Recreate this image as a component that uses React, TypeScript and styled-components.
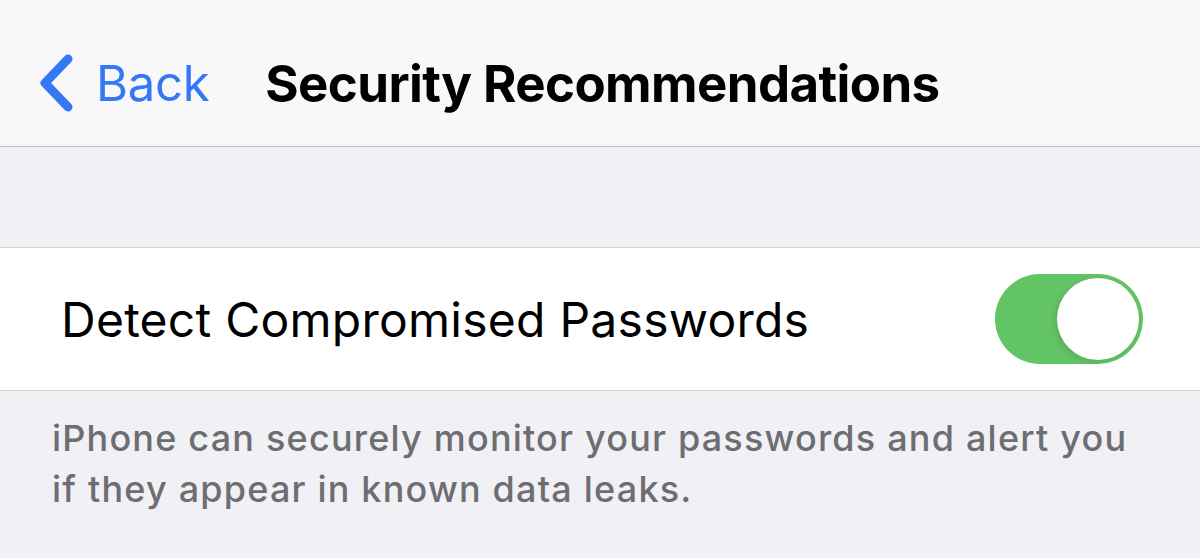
import React from "react";
import styled, { createGlobalStyle } from "styled-components";

const Global = createGlobalStyle`
  html, body { margin: 0; padding: 0; background: #f0f0f5; }
  body { font-family: Inter, "Noto Sans", sans-serif; -webkit-font-smoothing: antialiased; }
`;

const Page = styled.div`
  width: 1200px;
  height: 558px;
  overflow: hidden;
  background: #f0f0f5;
  display: flex;
  flex-direction: column;
`;

const NavBar = styled.header`
  height: 147px;
  box-sizing: border-box;
  background: #f8f8fa;
  border-bottom: 1.5px solid #bdbcc1;
  display: flex;
  align-items: center;
  padding: 20px 0 0 38px;
`;

const BackButton = styled.button`
  display: flex;
  align-items: center;
  gap: 22px;
  border: 0;
  background: none;
  padding: 0;
  color: #3478f6;
  font-family: inherit;
  font-size: 49px;
  font-weight: 400;
  letter-spacing: -0.3px;
`;

const Title = styled.h1`
  margin: 0 0 0 56px;
  font-size: 51px;
  font-weight: 700;
  color: #000;
  letter-spacing: -0.6px;
`;

const Spacer = styled.div`
  height: 101px;
  box-sizing: border-box;
  border-bottom: 1.5px solid #d3d2d7;
`;

const Row = styled.div`
  height: 143px;
  box-sizing: border-box;
  background: #ffffff;
  border-bottom: 1.5px solid #d3d2d7;
  display: flex;
  align-items: center;
  justify-content: space-between;
  padding: 0 57px 0 61px;
`;

const RowLabel = styled.span`
  font-size: 48px;
  font-weight: 400;
  color: #000;
  letter-spacing: 0.25px;
`;

const Toggle = styled.div<{ $on: boolean }>`
  width: 148px;
  height: 90px;
  border-radius: 45px;
  background: ${(p) => (p.$on ? "#63c466" : "#e9e9eb")};
  box-sizing: border-box;
  display: flex;
  justify-content: ${(p) => (p.$on ? "flex-end" : "flex-start")};
  align-items: center;
  padding: 4px;
`;

const Knob = styled.div`
  width: 82px;
  height: 82px;
  border-radius: 50%;
  background: #fff;
  box-shadow: -2px 2px 6px rgba(0, 0, 0, 0.12);
`;

const Footer = styled.p`
  margin: 0;
  padding: 22px 20px 0 52px;
  font-size: 36px;
  line-height: 51px;
  font-weight: 500;
  color: #6d6d72;
  letter-spacing: 1.2px;
  white-space: nowrap;
`;

export default function App() {
  return (
    <Page>
      <Global />
      <NavBar>
        <BackButton>
          <svg width="36" height="58" viewBox="0 0 36 58" fill="none">
            <path
              d="M30 5 L7 29 L30 53"
              stroke="#3478f6"
              strokeWidth="9"
              strokeLinecap="round"
              strokeLinejoin="round"
            />
          </svg>
          Back
        </BackButton>
        <Title>Security Recommendations</Title>
      </NavBar>
      <Spacer />
      <Row>
        <RowLabel>Detect Compromised Passwords</RowLabel>
        <Toggle $on>
          <Knob />
        </Toggle>
      </Row>
      <Footer>
        iPhone can securely monitor your passwords and alert you
        <br />
        if they appear in known data leaks.
      </Footer>
    </Page>
  );
}
